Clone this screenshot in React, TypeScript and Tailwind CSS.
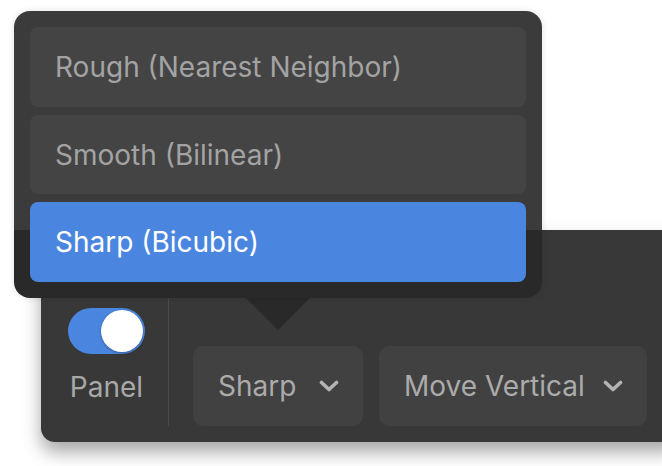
import React, { useState } from 'react';

const options = ['Rough (Nearest Neighbor)', 'Smooth (Bilinear)', 'Sharp (Bicubic)'];

function Chevron() {
  return (
    <svg width="20" height="12" viewBox="0 0 20 12" fill="none">
      <path d="M2.5 2.5 L10 9.5 L17.5 2.5" stroke="#b4b4b4" strokeWidth="3.6" strokeLinecap="round" strokeLinejoin="round" />
    </svg>
  );
}

function Select({ label, width }: { label: string; width: string }) {
  return (
    <button className={`${width} h-[80px] rounded-[10px] bg-[#414141] flex items-center justify-between pl-[25px] pr-[24px] text-[28px] text-[#ababab]`}>
      <span>{label}</span>
      <Chevron />
    </button>
  );
}

export default function App() {
  const [selected, setSelected] = useState(2);
  const [panel, setPanel] = useState(true);

  return (
    <div className="relative w-[662px] h-[466px] overflow-hidden bg-white font-['Inter','Liberation_Sans',sans-serif]">
      {/* toolbar */}
      <div className="ml-[41px] mt-[230px] w-[640px] h-[212px] rounded-[14px] bg-[#383838] shadow-[0_10px_18px_rgba(0,0,0,0.35)] flex items-stretch pt-[68px] pb-[16px]">
        <div className="w-[127px] pl-[27px] pr-[23px] pt-[10px] flex flex-col items-center">
          <button
            onClick={() => setPanel(!panel)}
            className={`w-[77px] h-[46px] rounded-full p-[2px] flex ${panel ? 'bg-[#4a86e0] justify-end' : 'bg-[#555] justify-start'}`}
          >
            <span className="w-[42px] h-[42px] rounded-full bg-white shadow-[0_1px_3px_rgba(0,0,0,0.3)]" />
          </button>
          <span className="mt-[17px] text-[28px] leading-[32px] text-[#a8a8a8]">Panel</span>
        </div>
        <div className="w-px bg-[#4a4a4a]" />
        <div className="flex items-end gap-[16px] ml-[24px]">
          <Select label="Sharp" width="w-[170px]" />
          <Select label="Move Vertical" width="w-[268px]" />
        </div>
      </div>

      {/* caret */}
      <svg className="absolute left-[245px] top-[297px]" width="66" height="34" viewBox="0 0 66 34">
        <polygon points="0,0 66,0 33,33" fill="#292929" />
      </svg>

      {/* popup */}
      <div className="absolute left-[14px] top-[11px] w-[528px] h-[287px] rounded-[16px] p-[16px] flex flex-col gap-[8px] bg-[linear-gradient(to_bottom,#3b3b3b_219px,#292929_219px)] shadow-[0_0_6px_rgba(0,0,0,0.12)]">
        {options.map((o, i) => (
          <button
            key={o}
            onClick={() => setSelected(i)}
            className={`h-[80px] rounded-[8px] text-left pl-[25px] text-[28px] ${
              i === selected ? 'bg-[#4a86e0] text-white' : 'bg-[#444444] text-[#a3a3a3]'
            }`}
          >
            {o}
          </button>
        ))}
      </div>
    </div>
  );
}
